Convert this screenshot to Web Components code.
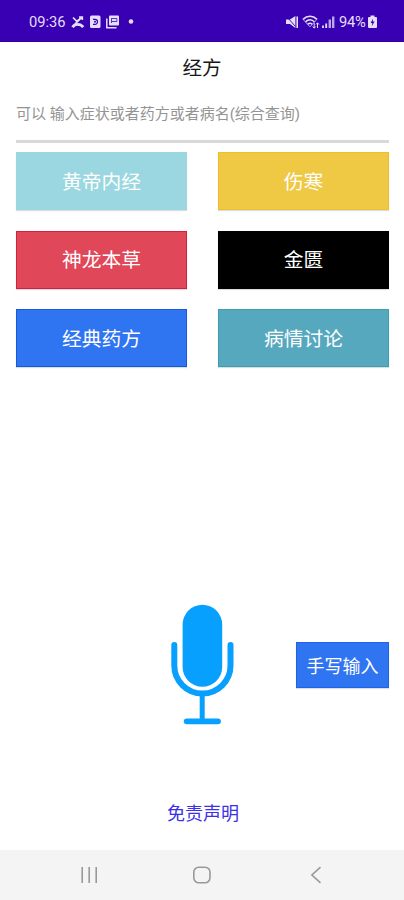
<!DOCTYPE html>
<html lang="zh-CN">
<head>
<meta charset="utf-8">
<title>经方</title>
<style>
html,body{margin:0;height:100%;background:#fff}
body{font-family:Roboto,"Noto Sans CJK SC",sans-serif;overflow:hidden}
</style>
</head>
<body>
<jf-app></jf-app>
<script>
function define(name, html, setup) {
  const t = document.createElement('template');
  t.innerHTML = html;
  customElements.define(name, class extends HTMLElement {
    constructor() {
      super();
      this.attachShadow({mode: 'open'}).append(t.content.cloneNode(true));
    }
    connectedCallback() { if (setup) setup(this); }
  });
}

define('jf-status-bar', `
<style>
:host{display:flex;height:42px;box-sizing:border-box;padding:0 27px 0 29px;background:#3800b2;color:#e6def8;align-items:center;justify-content:space-between;font-size:14.7px;line-height:20px;border-bottom:1px solid #2b0098}
div{display:flex;align-items:center;height:20px;margin-top:2px}
svg{display:block;flex:none}
.time{width:42px}
.pct{width:29px;letter-spacing:-.2px}
</style>
<div><span class="time">09:36</span>
<svg width="64" height="16" viewBox="0 0 64 16" fill="none" stroke="#e6def8">
  <path d="M2 3.5L6 7.5L11 3M8 3h3.3v3" stroke-width="1.7"/>
  <path d="M1.5 13.2C3.8 9.5 9.5 9.5 12.2 13.2" stroke-width="2.8"/>
  <path d="M9 5L4 10" stroke-width="1.6"/>
  <rect x="19" y="1.5" width="10.5" height="12.5" rx="1.5" fill="#e6def8" stroke="none"/>
  <path d="M22 5.3h2a2.4 2.4 0 0 1 0 5h-2" stroke="#3800b2" stroke-width="1.2"/>
  <circle cx="24" cy="7.8" r="1" fill="#3800b2" stroke="none"/>
  <rect x="38" y="1.5" width="10" height="10" rx="1" fill="#e6def8" stroke="none"/>
  <path d="M35.8 4.5v9.2h9.7" stroke-width="1.5"/>
  <path d="M40.5 4.5h5.4v3h-5.4M40.5 4v5" stroke="#5a32c2" stroke-width="1"/>
  <circle cx="60" cy="7.5" r="2.3" fill="#e6def8" stroke="none"/>
</svg></div>
<div>
<svg width="53" height="16" viewBox="0 0 53 16" fill="none" stroke="#e6def8">
  <path d="M0 5.5h4L9.4 2v12L4 10H0z" fill="#e6def8" stroke="none"/>
  <path d="M1 3L9.5 12.5" stroke="#3800b2" stroke-width=".9"/>
  <path d="M11.2 2.5v11.5" stroke-width="1.6"/>
  <path d="M17 5.3c4.2-4 9.8-4 14 0M19.4 8c3-2.8 6.4-2.8 9.2 0M21.7 10.3c1.6-1.4 3-1.4 4.5 0" stroke-width="1.6"/>
  <path d="M17 5.3L24 12.8L31 5.3" stroke="#b9a7e7" stroke-width="1"/>
  <path d="M28.2 9v5M26.7 12.5l1.5 1.7 1.5-1.7M31.5 14V9M30 10.5l1.5-1.7 1.5 1.7" stroke-width="1"/>
  <path d="M37 14v-2.5M40.2 14V9.5" stroke-width="1.8"/>
  <path d="M43.8 14V5.5M47.2 14V2.5" stroke="#b9a7e7" stroke-width="2.4"/>
</svg>
<span class="pct">94%</span>
<svg width="9" height="16" viewBox="0 0 9 16"><path d="M2.5 1.5h4V3H8q1 0 1 1v9q0 1-1 1H1q-1 0-1-1V4q0-1 1-1h1.5z" fill="#e6def8"/><path d="M5 4.8L2.6 9h1.7L3.8 12.2 6.6 7.6H4.8z" fill="#3800b2"/></svg>
</div>`);

define('jf-tile', `
<style>
:host{display:flex;align-items:center;justify-content:center;box-sizing:border-box;color:#fff;background:var(--c);font-size:19.8px;line-height:28px;height:58px;border:1px solid var(--e,var(--c));box-shadow:0 1px 1px #0002}
:host([small]){width:93px;height:46px;font-size:18px}
span{padding-top:3px}
</style><span><slot></slot></span>`, el => {
  el.style.setProperty('--c', el.getAttribute('color'));
  if (el.hasAttribute('edge')) el.style.setProperty('--e', el.getAttribute('edge'));
});

define('jf-search', `
<style>
:host{display:block;box-sizing:border-box;height:51px;margin:0 15px 0 16px;padding-top:11px;border-bottom:3px solid #d9d9d9;color:#949494;font-size:15px;line-height:22px;white-space:nowrap}
</style><slot></slot>`);

define('jf-mic', `
<style>:host{display:block;width:66px;height:122px}svg{display:block}</style>
<svg width="66" height="122" viewBox="170 604 66 122" fill="none" stroke="#08a0ff" stroke-linecap="round">
  <rect x="182.6" y="604.8" width="39.6" height="82" rx="19.8" fill="#08a0ff" stroke="none"/>
  <path d="M174.3 645v20.5a28.1 28.1 0 0 0 56.2 0V645" stroke-width="6"/>
  <path d="M202.2 696v24" stroke-width="5"/>
  <path d="M186.7 721.3h31.3" stroke-width="5.8"/>
</svg>`);

define('jf-nav', `
<style>:host{display:flex;height:50px;background:#f4f4f4;align-items:center;padding:0 79px;justify-content:space-between}svg{display:block}</style>
<svg width="20" height="20" fill="none" stroke="#999" stroke-width="1.6"><path d="M3.2 2v16M10.2 2v16M17.2 2v16"/></svg>
<svg width="20" height="20" fill="none" stroke="#999" stroke-width="1.6"><rect x="1.8" y="2.2" width="16.2" height="15.6" rx="5"/></svg>
<svg width="20" height="20" fill="none" stroke="#999" stroke-width="1.6"><path d="M15.5 2.2L6.9 10L15.5 17.8"/></svg>`);

define('jf-app', `
<style>
:host{display:flex;flex-direction:column;height:900px;background:#fff}
h1{margin:0;box-sizing:border-box;height:50px;padding-top:4px;font-size:19.5px;line-height:46px;font-weight:400;text-align:center;color:#161616}
.grid{display:grid;grid-template-columns:171px 171px;grid-template-rows:58px 58px 58px;column-gap:31px;row-gap:20.5px;padding:9px 15px 0 16px}
.voice{display:grid;grid-template-columns:1fr 66px 1fr;margin:auto 15px 0 16px;align-items:center}
.voice jf-mic{grid-column:2}
.voice jf-tile{justify-self:end}
.legal{height:124px;box-sizing:border-box;padding-top:75px;line-height:26px;text-align:center;font-size:18px;color:#3c31e6;padding-left:2px}
</style>
<jf-status-bar></jf-status-bar>
<h1>经方</h1>
<jf-search>可以 输入症状或者药方或者病名(综合查询)</jf-search>
<div class="grid">
  <jf-tile color="#9ad7e0">黄帝内经</jf-tile><jf-tile color="#efc844" edge="#edc02b">伤寒</jf-tile>
  <jf-tile color="#e04759" edge="#d0213f">神龙本草</jf-tile><jf-tile color="#000">金匮</jf-tile>
  <jf-tile color="#2f74f0" edge="#1559dc">经典药方</jf-tile><jf-tile color="#56a8be" edge="#3f9db1">病情讨论</jf-tile>
</div>
<div class="voice"><jf-mic></jf-mic><jf-tile small color="#2f74f0" edge="#1f62e6">手写输入</jf-tile></div>
<div class="legal">免责声明</div>
<jf-nav></jf-nav>`);
</script>
</body>
</html></script>
